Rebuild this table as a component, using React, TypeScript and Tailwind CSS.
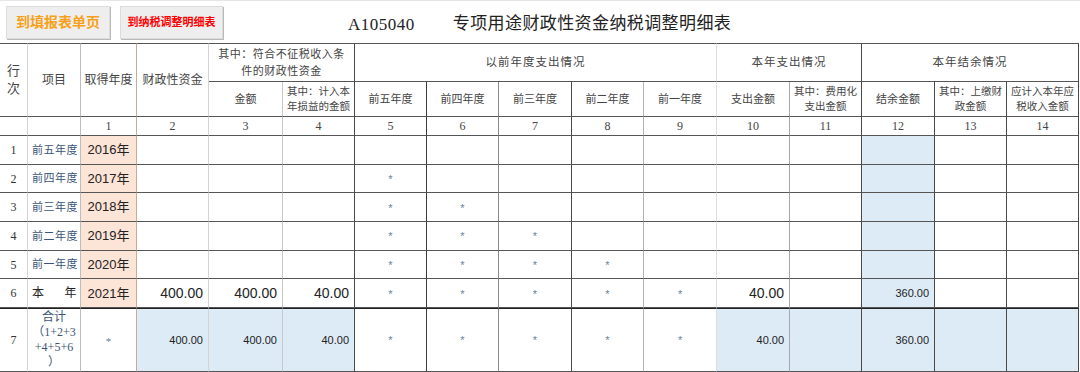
import React from 'react';

// right-edge line colour of each of the 16 columns
const vr = [
  'border-r-[#d4d4d4]',
  'border-r-[#bdbdbd]',
  'border-r-[#c9a99a]',
  'border-r-[#d4d4d4]',
  'border-r-[#c8c8c8]',
  'border-r-[#4a4a4a]',
  'border-r-[#3c3c3c]',
  'border-r-[#8a8a8a]',
  'border-r-[#4a4a4a]',
  'border-r-[#b4b4b4]',
  'border-r-[#dedede]',
  'border-r-[#a8a8a8]',
  'border-r-[#4a4a4a]',
  'border-r-[#4a4a4a]',
  'border-r-[#4a4a4a]',
  'border-r-[#4a4a4a]',
];

const widths = [28, 53, 56, 72, 74, 72, 72, 72, 73, 72, 73, 73, 72, 73, 72, 72];

const serif = "font-['Liberation_Serif','Noto_Sans_CJK_SC',serif]";
const sans = "font-['Liberation_Sans','Noto_Sans_CJK_SC',sans-serif]";

type Row = {
  no: string;
  label: string;
  year: string;
  vals: string[]; // table columns 3..15
};

const rows: Row[] = [
  { no: '1', label: '前五年度', year: '2016年', vals: ['', '', '', '', '', '', '', '', '', '', '', '', ''] },
  { no: '2', label: '前四年度', year: '2017年', vals: ['', '', '', '*', '', '', '', '', '', '', '', '', ''] },
  { no: '3', label: '前三年度', year: '2018年', vals: ['', '', '', '*', '*', '', '', '', '', '', '', '', ''] },
  { no: '4', label: '前二年度', year: '2019年', vals: ['', '', '', '*', '*', '*', '', '', '', '', '', '', ''] },
  { no: '5', label: '前一年度', year: '2020年', vals: ['', '', '', '*', '*', '*', '*', '', '', '', '', '', ''] },
  { no: '6', label: '本年', year: '2021年', vals: ['400.00', '400.00', '40.00', '*', '*', '*', '*', '*', '40.00', '', '360.00', '', ''] },
];

const totals: Record<number, string> = { 3: '400.00', 4: '400.00', 5: '40.00', 11: '40.00', 13: '360.00' };

function Star() {
  return <span className="text-[11px] text-[#6a7f95]">*</span>;
}

export default function App() {
  const hb = 'border-b border-b-[#555555] border-r';
  return (
    <div className="w-[1080px] h-[372px] bg-white overflow-hidden">
      {/* top bar */}
      <div className="h-[43px] flex items-start border-t border-t-[#e6e6e6]">
        <button className={`ml-[6px] mt-[5px] w-[104px] h-[33px] bg-[#eeeeee] border border-[#dcdcdc] shadow-[1px_1px_0_#b9b9b9] text-[14px] font-bold text-[#f7a11a] ${sans}`}>
          到填报表单页
        </button>
        <button className={`ml-[10px] mt-[5px] w-[103px] h-[33px] bg-[#eeeeee] border border-[#dcdcdc] shadow-[1px_1px_0_#b9b9b9] text-[11px] font-bold text-[#ff0000] ${sans}`}>
          到纳税调整明细表
        </button>
        <div className={`ml-[125px] mt-[11px] text-[17px] text-[#222] tracking-[0.5px] ${serif}`}>A105040</div>
        <div className={`ml-[38px] mt-[10px] text-[17px] text-[#222] tracking-[0.4px] ${serif}`}>专项用途财政性资金纳税调整明细表</div>
      </div>

      <table className={`table-fixed border-separate border-spacing-0 w-[1079px] text-[#444] ${serif}`}>
        <colgroup>
          {widths.map((w, i) => (
            <col key={i} style={{ width: w }} />
          ))}
        </colgroup>
        <thead>
          <tr className="h-[39px]">
            <td rowSpan={2} className={`${hb} ${vr[0]} border-t border-t-[#555] text-center text-[13px] leading-[18px]`}>行<br />次</td>
            <td rowSpan={2} className={`${hb} ${vr[1]} border-t border-t-[#555] text-center text-[12px]`}>项目</td>
            <td rowSpan={2} className={`${hb} ${vr[2]} border-t border-t-[#555] text-center text-[12px] whitespace-nowrap`}>取得年度</td>
            <td rowSpan={2} className={`${hb} ${vr[3]} border-t border-t-[#555] text-center text-[12px] whitespace-nowrap`}>财政性资金</td>
            <td colSpan={2} className={`border-b border-b-[#555] border-r ${vr[5]} border-t border-t-[#555] text-center text-[11px] leading-[17px] tracking-[0.5px] whitespace-nowrap`}>
              其中：符合不征税收入条<br />件的财政性资金
            </td>
            <td colSpan={5} className={`border-b border-b-[#555] border-r ${vr[10]} border-t border-t-[#555] text-center text-[11.5px] tracking-[1px]`}>以前年度支出情况</td>
            <td colSpan={2} className={`border-b border-b-[#555] border-r ${vr[12]} border-t border-t-[#555] text-center text-[11.5px] tracking-[1px]`}>本年支出情况</td>
            <td colSpan={3} className={`border-b border-b-[#555] border-r ${vr[15]} border-t border-t-[#555] text-center text-[11.5px] tracking-[1px]`}>本年结余情况</td>
          </tr>
          <tr className="h-[35px]">
            <td className={`${hb} ${vr[4]} text-center text-[11px]`}>金额</td>
            <td className={`${hb} ${vr[5]} text-center text-[10.5px] leading-[15px]`}>其中：计入本年损益的金额</td>
            {['前五年度', '前四年度', '前三年度', '前二年度', '前一年度'].map((t, i) => (
              <td key={t} className={`${hb} ${vr[6 + i]} text-center text-[11px]`}>{t}</td>
            ))}
            <td className={`${hb} ${vr[11]} text-center text-[11px]`}>支出金额</td>
            <td className={`${hb} ${vr[12]} text-center text-[10.5px] leading-[15px]`}>其中：费用化支出金额</td>
            <td className={`${hb} ${vr[13]} text-center text-[11px]`}>结余金额</td>
            <td className={`${hb} ${vr[14]} text-center text-[10.5px] leading-[15px]`}>其中：上缴财政金额</td>
            <td className={`${hb} ${vr[15]} text-center text-[10.5px] leading-[15px]`}>应计入本年应税收入金额</td>
          </tr>
          <tr className="h-[19px]">
            <td className={`${hb} ${vr[0]}`} />
            <td className={`${hb} ${vr[1]}`} />
            {Array.from({ length: 14 }, (_, i) => (
              <td key={i} className={`${hb} ${vr[i + 2]} text-center text-[12px] leading-[12px]`}>{i + 1}</td>
            ))}
          </tr>
        </thead>
        <tbody>
          {rows.map((r) => (
            <tr key={r.no} className={r.no === '6' ? 'h-[29px]' : 'h-[28.7px]'}>
              <td className={`border-r border-b border-b-[#555] ${vr[0]} text-center text-[12px] text-[#333]`}>{r.no}</td>
              <td className={`border-r border-b border-b-[#555] ${vr[1]} text-[11px] tracking-[0.5px] text-[#3b5577] pl-[4px] whitespace-nowrap`}>
                {r.label === '本年' ? (
                  <div className="flex justify-between pr-[3px] text-[12px] text-[#222]"><span>本</span><span>年</span></div>
                ) : (
                  r.label
                )}
              </td>
              <td className={`border-r border-b border-b-[#555] ${vr[2]} bg-[#fce4d6] text-center text-[13px] text-[#222] ${sans}`}>{r.year}</td>
              {r.vals.map((v, i) => {
                const col = i + 3;
                const blue = col === 13;
                return (
                  <td
                    key={i}
                    className={`border-r border-b border-b-[#555] ${vr[col]} ${blue ? 'bg-[#ddebf7]' : ''} ${sans} ${v === '*' ? 'text-center' : 'text-right pr-[5px]'} ${col === 13 ? 'text-[11px]' : 'text-[14px]'} text-[#222]`}
                  >
                    {v === '*' ? <Star /> : v}
                  </td>
                );
              })}
            </tr>
          ))}
          <tr className="h-[64px]">
            <td className={`border-r border-b border-t border-t-[#222] border-b-[#555] ${vr[0]} text-center text-[12px] text-[#333]`}>7</td>
            <td className={`border-r border-b border-t border-t-[#222] border-b-[#555] ${vr[1]} text-center text-[12px] leading-[15px] text-[#3b5577]`}>
              合计<br />（1+2+3<br />+4+5+6<br />）
            </td>
            <td className={`border-r border-b border-t border-t-[#222] border-b-[#555] ${vr[2]} text-center`}><Star /></td>
            {Array.from({ length: 13 }, (_, i) => {
              const col = i + 3;
              const star = col >= 6 && col <= 10;
              const val = totals[col] ?? '';
              return (
                <td
                  key={i}
                  className={`border-r border-b border-t border-t-[#222] border-b-[#555] ${vr[col]} ${star ? 'text-center' : 'bg-[#ddebf7] text-right pr-[5px]'} text-[11px] text-[#222] ${sans}`}
                >
                  {star ? <Star /> : val}
                </td>
              );
            })}
          </tr>
        </tbody>
      </table>
    </div>
  );
}
